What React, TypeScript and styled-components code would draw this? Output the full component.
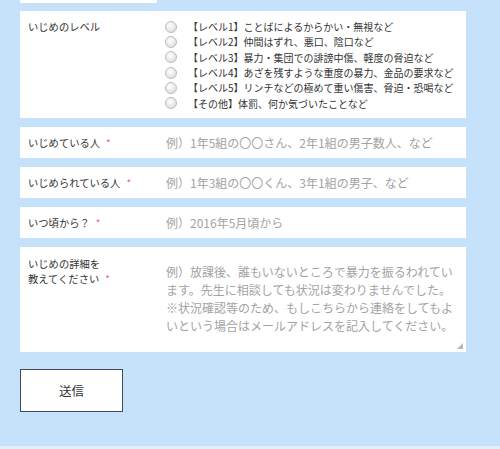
import React from "react";
import styled, { createGlobalStyle } from "styled-components";

const GlobalStyle = createGlobalStyle`
  html, body {
    margin: 0;
    padding: 0;
    background: #c6e2fa;
  }
  body {
    font-family: "Noto Sans CJK JP", "Noto Sans", sans-serif;
    color: #333;
  }
`;

const SPage = styled.div`
  display: flex;
  flex-direction: column;
  width: 500px;
  min-height: 449px;
`;

const SPrevEdge = styled.div`
  width: 137px;
  height: 3px;
  margin-left: 20px;
  background: #fff;
`;

const SForm = styled.form`
  display: flex;
  flex-direction: column;
  gap: 9px;
  width: 446px;
  margin: 8px 0 0 20px;
`;

const SRow = styled.div<{ $top?: boolean; $height: number }>`
  display: grid;
  grid-template-columns: 137px 1fr;
  align-items: ${(p) => (p.$top ? "start" : "center")};
  height: ${(p) => p.$height}px;
  padding-left: 8px;
  background: #fff;
`;

const SLabel = styled.div<{ $pad?: number }>`
  font-size: 10.3px;
  line-height: 15px;
  padding-top: ${(p) => p.$pad ?? 0}px;
  color: #333;
`;

const SRequired = styled.span`
  margin-left: 6px;
  color: #e86a6a;
  font-size: 10px;
`;

const SRadioList = styled.div`
  display: flex;
  flex-direction: column;
  padding: 8px 0 6px;
`;

const SRadioItem = styled.label`
  display: flex;
  align-items: center;
  height: 15.3px;
  font-size: 10px;
  color: #333;
  white-space: nowrap;
`;

const SRadio = styled.input`
  appearance: none;
  width: 10px;
  height: 10px;
  margin: 0 11px 0 0;
  border: 1px solid #bcbcbc;
  border-radius: 50%;
  background: radial-gradient(circle at 40% 35%, #ffffff 0%, #e8e8e8 55%, #d2d2d2 100%);
  box-sizing: content-box;
`;

const SInput = styled.input`
  width: 100%;
  height: 31px;
  padding: 0 0 0 1px;
  border: none;
  outline: none;
  background: transparent;
  font-family: inherit;
  font-size: 12px;
  color: #333;
  &::placeholder {
    color: #a3a3a3;
  }
`;

const SAreaWrap = styled.div`
  position: relative;
  height: 105px;

  &::after {
    content: "";
    position: absolute;
    right: 3px;
    bottom: 3px;
    width: 6px;
    height: 6px;
    background: radial-gradient(circle, #b5b5b5 0.7px, transparent 1px) 0 0 / 2px 2px;
    clip-path: polygon(100% 0, 100% 100%, 0 100%);
    pointer-events: none;
  }
`;

const STextArea = styled.textarea`
  display: block;
  width: 100%;
  height: 100%;
  box-sizing: border-box;
  padding: 16px 0 0 1px;
  border: none;
  outline: none;
  background: transparent;
  font-family: inherit;
  font-size: 12px;
  line-height: 18px;
  resize: none;
  color: #333;
  overflow: hidden;
  &::placeholder {
    color: #a3a3a3;
  }
`;

const SSubmit = styled.button`
  width: 103px;
  height: 43px;
  margin: 17px 0 0 20px;
  border: 1px solid #3f4b5a;
  background: #fff;
  font-family: inherit;
  font-size: 12.5px;
  color: #333;
  cursor: pointer;
`;

const SSpacer = styled.div`
  flex: 1;
`;

const SFooterEdge = styled.div`
  height: 3px;
  background: #e3effa;
`;

const levels = [
  "【レベル1】ことばによるからかい・無視など",
  "【レベル2】仲間はずれ、悪口、陰口など",
  "【レベル3】暴力・集団での誹謗中傷、軽度の脅迫など",
  "【レベル4】あざを残すような重度の暴力、金品の要求など",
  "【レベル5】リンチなどの極めて重い傷害、脅迫・恐喝など",
  "【その他】体罰、何か気づいたことなど",
];

const detailPlaceholder =
  "例）放課後、誰もいないところで暴力を振るわれてい\n" +
  "ます。先生に相談しても状況は変わりませんでした。\n" +
  "※状況確認等のため、もしこちらから連絡をしてもよ\n" +
  "いという場合はメールアドレスを記入してください。";

export default function App() {
  const [level, setLevel] = React.useState<string | null>(null);

  return (
    <>
      <GlobalStyle />
      <SPage>
        <SPrevEdge />
        <SForm onSubmit={(e) => e.preventDefault()}>
          <SRow $top $height={107}>
            <SLabel $pad={8}>いじめのレベル</SLabel>
            <SRadioList>
              {levels.map((text) => (
                <SRadioItem key={text}>
                  <SRadio
                    type="radio"
                    name="level"
                    checked={level === text}
                    onChange={() => setLevel(text)}
                  />
                  {text}
                </SRadioItem>
              ))}
            </SRadioList>
          </SRow>
          <SRow $height={31}>
            <SLabel>
              いじめている人<SRequired>*</SRequired>
            </SLabel>
            <SInput placeholder="例）1年5組の〇〇さん、2年1組の男子数人、など" />
          </SRow>
          <SRow $height={31}>
            <SLabel>
              いじめられている人<SRequired>*</SRequired>
            </SLabel>
            <SInput placeholder="例）1年3組の〇〇くん、3年1組の男子、など" />
          </SRow>
          <SRow $height={31}>
            <SLabel>
              いつ頃から？<SRequired>*</SRequired>
            </SLabel>
            <SInput placeholder="例）2016年5月頃から" />
          </SRow>
          <SRow $top $height={105}>
            <SLabel $pad={9}>
              いじめの詳細を
              <br />
              教えてください<SRequired>*</SRequired>
            </SLabel>
            <SAreaWrap>
              <STextArea placeholder={detailPlaceholder} />
            </SAreaWrap>
          </SRow>
        </SForm>
        <SSubmit type="submit">送信</SSubmit>
        <SSpacer />
        <SFooterEdge />
      </SPage>
    </>
  );
}
